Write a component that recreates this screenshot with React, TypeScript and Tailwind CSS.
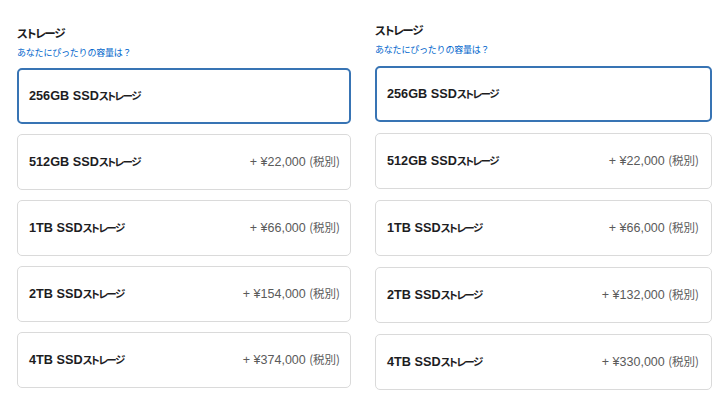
import React from "react";

type Opt = { size: string; price?: string };

const left: Opt[] = [
  { size: "256GB" },
  { size: "512GB", price: "22,000" },
  { size: "1TB", price: "66,000" },
  { size: "2TB", price: "154,000" },
  { size: "4TB", price: "374,000" },
];
const right: Opt[] = [
  { size: "256GB" },
  { size: "512GB", price: "22,000" },
  { size: "1TB", price: "66,000" },
  { size: "2TB", price: "132,000" },
  { size: "4TB", price: "330,000" },
];

const FONT = '"Liberation Sans", "Noto Sans CJK JP", sans-serif';
const JP = '"Noto Sans CJK JP", sans-serif';

function Box({ o, selected, pr }: { o: Opt; selected: boolean; pr: string }) {
  return (
    <div
      className={
        "h-[56px] flex items-center justify-between rounded-[5px] bg-white " +
        (selected
          ? "border-2 border-[#3874b4] pl-[10px] pr-[10px]"
          : "border border-[#dadada] pl-[11px] " + pr)
      }
    >
      <span className="text-[12.7px] font-bold text-[#1d1d1f] leading-none">
        {o.size} SSD
        <span
          className="text-[10.5px] font-bold tracking-[-1.5px]"
          style={{ fontFamily: JP, fontFeatureSettings: '"palt"' }}
        >
          ストレージ
        </span>
      </span>
      {o.price && (
        <span className="text-[12.5px] text-[#5a5a5a] leading-none">
          + ¥{o.price}{" "}
          <span className="text-[11.5px]" style={{ fontFamily: JP }}>
            (税別)
          </span>
        </span>
      )}
    </div>
  );
}

function Column({
  opts,
  pt,
  boxMt,
  gap,
  width,
  pr,
}: {
  opts: Opt[];
  pt: string;
  boxMt: string;
  gap: string;
  width: string;
  pr: string;
}) {
  return (
    <div className={"flex flex-col " + pt + " " + width}>
      <div
        className="text-[11.5px] font-bold text-[#1d1d1f] leading-[14px] tracking-[-1.2px]"
        style={{ fontFamily: JP, fontFeatureSettings: '"palt"' }}
      >
        ストレージ
      </div>
      <div
        className="mt-[8px] text-[9px] leading-[10px] text-[#0066cc] tracking-[-0.2px]"
        style={{ fontFamily: JP }}
      >
        あなたにぴったりの容量は？
      </div>
      <div className={"flex flex-col " + boxMt + " " + gap}>
        {opts.map((o, i) => (
          <Box key={i} o={o} selected={i === 0} pr={pr} />
        ))}
      </div>
    </div>
  );
}

export default function App() {
  return (
    <div
      className="w-[728px] h-[409px] bg-white flex pl-[17px] gap-[24px] overflow-hidden"
      style={{ fontFamily: FONT }}
    >
      <Column opts={left} pt="pt-[26px]" boxMt="mt-[10px]" gap="gap-[10px]" width="w-[334px]" pr="pr-[10px]" />
      <Column opts={right} pt="pt-[23px]" boxMt="mt-[11px]" gap="gap-[11px]" width="w-[337px]" pr="pr-[12px]" />
    </div>
  );
}
